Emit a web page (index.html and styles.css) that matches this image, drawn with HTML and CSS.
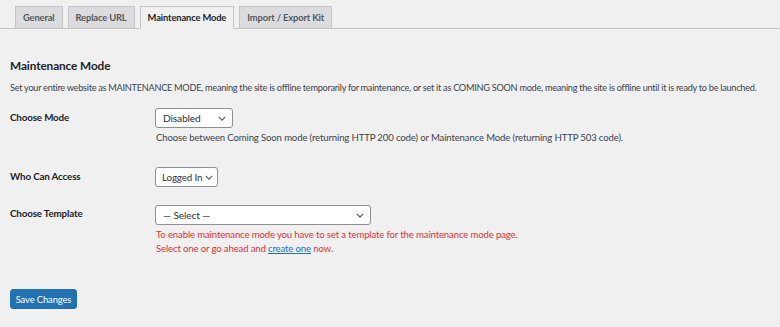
FILE: index.html
```html
<!DOCTYPE html>
<html>
<head>
<meta charset="utf-8">
<link rel="stylesheet" href="styles.css">
</head>
<body>
<div class="wrap">
  <nav class="tabs">
    <a class="tab">General</a>
    <a class="tab">Replace URL</a>
    <a class="tab active">Maintenance Mode</a>
    <a class="tab">Import / Export Kit</a>
  </nav>
  <h2 class="title">Maintenance Mode</h2>
  <p class="intro">Set your entire website as MAINTENANCE MODE, meaning the site is offline temporarily for maintenance, or set it as COMING SOON mode, meaning the site is offline until it is ready to be launched.</p>
  <div class="row row-mode">
    <div class="label">Choose Mode</div>
    <div class="field">
      <div class="select sel-mode"><span>Disabled</span><svg class="chev" viewBox="0 0 10 6"><path d="M1 1l4 4 4-4" fill="none" stroke="#50575e" stroke-width="1.4"/></svg></div>
      <p class="help">Choose between Coming Soon mode (returning HTTP 200 code) or Maintenance Mode (returning HTTP 503 code).</p>
    </div>
  </div>
  <div class="row row-access">
    <div class="label">Who Can Access</div>
    <div class="field">
      <div class="select sel-access"><span>Logged In</span><svg class="chev" viewBox="0 0 10 6"><path d="M1 1l4 4 4-4" fill="none" stroke="#50575e" stroke-width="1.4"/></svg></div>
    </div>
  </div>
  <div class="row row-template">
    <div class="label">Choose Template</div>
    <div class="field">
      <div class="select sel-template"><span>— Select —</span><svg class="chev" viewBox="0 0 10 6"><path d="M1 1l4 4 4-4" fill="none" stroke="#50575e" stroke-width="1.4"/></svg></div>
      <p class="error first">To enable maintenance mode you have to set a template for the maintenance mode page.</p>
      <p class="error">Select one or go ahead and <a class="link">create one</a> now.</p>
    </div>
  </div>
  <div class="submit"><button class="btn">Save Changes</button></div>
</div>
</body>
</html>
```
FILE: styles.css
```css
html, body { margin: 0; padding: 0; background: #f0f0f1; }
body { font-family: Lato, "Open Sans", sans-serif; color: #3c434a; font-size: 9.6px; letter-spacing: -0.15px; }
.wrap { padding: 5px 10px 0 10px; }
.tabs { display: flex; gap: 5px; border-bottom: 1px solid #c3c4c7; height: 23px; align-items: flex-end; margin: 0 -10px; padding-left: 15px; }
.tab { box-sizing: border-box; height: 23px; margin-bottom: -1px; padding: 0 7px; display: flex; align-items: center; white-space: nowrap; background: #dcdcde; border: 1px solid #c3c4c7; color: #50575e; font-weight: 700; font-size: 9.4px; letter-spacing: -0.15px; }
.tab.active { background: #f0f0f1; border-bottom-color: #f0f0f1; color: #1d2327; }
.title { margin: 29px 0 0; font-size: 11.8px; font-weight: 700; color: #1d2327; line-height: 16px; letter-spacing: -0.1px; }
.intro { margin: 7px 0 0; line-height: 14px; white-space: nowrap; font-size: 9.2px; letter-spacing: -0.28px; }
.row { display: flex; }
.label { width: 145px; flex: none; color: #1d2327; font-weight: 700; font-size: 9.8px; }
.row-mode { margin-top: 13px; }
.row-mode .label { padding-top: 3px; }
.row-access { margin-top: 22px; }
.row-access .label { padding-top: 3px; }
.row-template { margin-top: 18px; }
.row-template .label { padding-top: 2px; }
.select { box-sizing: border-box; display: flex; align-items: center; justify-content: space-between; white-space: nowrap; background: #fff; border: 1px solid #8c8f94; border-radius: 3px; height: 20px; padding: 0 6px 0 7px; color: #2c3338; font-size: 10.2px; }
.chev { width: 8px; height: 5px; flex: none; }
.sel-mode { width: 78px; }
.sel-access { width: 63px; padding: 0 4px 0 6px; gap: 2px; font-size: 9.8px; }
.sel-template { width: 216px; }
.help { margin: 3px 0 0 1px; line-height: 14px; white-space: nowrap; }
.error { margin: 0 0 0 1px; color: #d63638; line-height: 14px; white-space: nowrap; }
.error.first { margin-top: 3px; }
.link { color: #2271b1; text-decoration: underline; }
.submit { margin-top: 33px; }
.btn { box-sizing: border-box; height: 20px; width: 67px; padding: 0; background: #2271b1; border: 1px solid #2271b1; border-radius: 3px; color: #fff; font-family: inherit; font-size: 9.4px; letter-spacing: -0.1px; }
```
